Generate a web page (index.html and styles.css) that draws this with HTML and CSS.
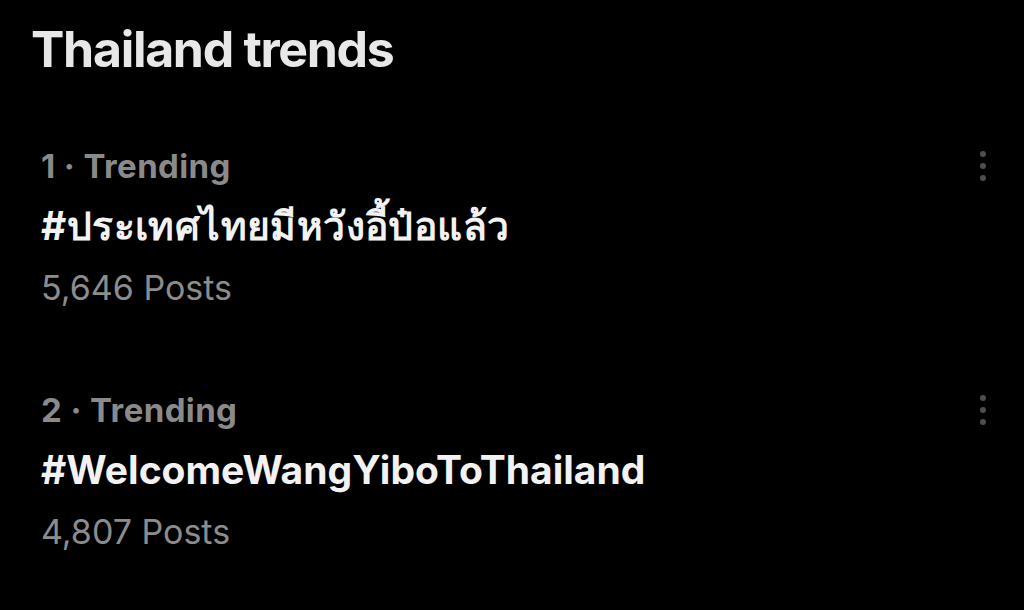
FILE: index.html
```html
<!DOCTYPE html>
<html lang="en">
<head>
<meta charset="utf-8">
<title>Thailand trends</title>
<link rel="stylesheet" href="styles.css">
</head>
<body>
<main class="panel">
  <h1 class="title">Thailand trends</h1>
  <ul class="trends">
    <li class="trend">
      <div class="trend-body">
        <div class="meta">1 · Trending</div>
        <div class="tag tag-th" lang="th">#ประเทศไทยมีหวังอี้ป๋อแล้ว</div>
        <div class="count">5,646 Posts</div>
      </div>
      <button class="more" aria-label="More">
        <svg width="10" height="32" viewBox="0 0 10 32"><circle cx="5" cy="4" r="3"/><circle cx="5" cy="16" r="3"/><circle cx="5" cy="28" r="3"/></svg>
      </button>
    </li>
    <li class="trend">
      <div class="trend-body">
        <div class="meta">2 · Trending</div>
        <div class="tag">#WelcomeWangYiboToThailand</div>
        <div class="count">4,807 Posts</div>
      </div>
      <button class="more" aria-label="More">
        <svg width="10" height="32" viewBox="0 0 10 32"><circle cx="5" cy="4" r="3"/><circle cx="5" cy="16" r="3"/><circle cx="5" cy="28" r="3"/></svg>
      </button>
    </li>
  </ul>
</main>
</body>
</html>
```

FILE: styles.css
```css
html, body {
  margin: 0;
  padding: 0;
  background: #000;
}
body {
  width: 1024px;
  height: 610px;
  overflow: hidden;
  font-family: "Inter", "Roboto", "Noto Sans", "DejaVu Sans", sans-serif;
  color: #e7e7e7;
}
.panel {
  padding: 19px 0 0 31px;
}
.title {
  margin: 0;
  font-size: 50px;
  font-weight: 700;
  line-height: 60px;
  letter-spacing: -1.3px;
  color: #e8e8e8;
}
.trends {
  list-style: none;
  margin: 0;
  padding: 0;
}
.trend {
  display: flex;
  justify-content: space-between;
  align-items: flex-start;
  padding-left: 10px;
}
.trend:first-child {
  margin-top: 67px;
}
.trend + .trend {
  margin-top: 81px;
}
.meta {
  font-size: 33px;
  font-weight: 700;
  line-height: 40px;
  color: #8a8a8a;
  letter-spacing: 0.4px;
}
.tag {
  font-size: 39px;
  font-weight: 700;
  line-height: 48px;
  color: #f2f2f2;
  margin-top: 16px;
}
.tag-th {
  letter-spacing: 0.4px;
}
.count {
  font-size: 34px;
  font-weight: 400;
  line-height: 42px;
  color: #8c8c8c;
  margin-top: 17px;
}
.more {
  background: none;
  border: 0;
  padding: 0;
  margin: 4px 36px 0 0;
}
.more svg {
  display: block;
  fill: #4e4e4e;
}
```
